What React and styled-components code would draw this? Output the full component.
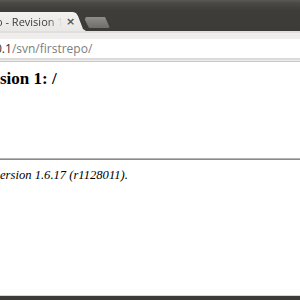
import React from 'react'
import styled, { createGlobalStyle } from 'styled-components';

const Global = createGlobalStyle`
  html, body {
    margin: 0;
    padding: 0;
    background: #3c3b37;
  }
  #root {
    width: 300px;
    height: 300px;
    overflow: hidden;
  }
`;

const App = () => {
  return (
    <Window>
      <Global />
      <TabStrip>
        <Tab>
          <TabTitle>o - Revision 1</TabTitle>
          <Close>×</Close>
        </Tab>
        <NewTab />
      </TabStrip>
      <Toolbar>
        <UrlField>
          <Host>0.1</Host>
          <Path>/svn/firstrepo/</Path>
        </UrlField>
      </Toolbar>
      <Page>
        <Heading2>sion 1: /</Heading2>
        <Rule />
        <Footer>ersion 1.6.17 (r1128011).</Footer>
      </Page>
      <StatusEdge />
    </Window>
  )
}

export default App

const Window = styled.div`
  width: 300px;
  height: 300px;
  display: flex;
  flex-direction: column;
  background: #3c3b37;
`;

const TabStrip = styled.div`
  height: 31px;
  flex-shrink: 0;
  display: flex;
  align-items: flex-end;
  background: linear-gradient(#5a5954 0px, #4a4945 3px, #3e3d39 10px, #3c3b37 31px);
`;

const Tab = styled.div`
  width: 86px;
  height: 19px;
  display: flex;
  align-items: center;
  background: linear-gradient(#f2f1f0, #e9e8e6);
  clip-path: polygon(0 0, 73px 0, 76px 1px, 78px 4px, 83px 17px, 86px 19px, 0 19px);
  overflow: hidden;
`;

const TabTitle = styled.span`
  margin-left: -4px;
  width: 65px;
  flex-shrink: 0;
  white-space: nowrap;
  font-family: "Open Sans", "Noto Sans", sans-serif;
  font-size: 11px;
  color: #3c3b37;
  -webkit-mask-image: linear-gradient(to right, #000 52px, transparent 66px);
  mask-image: linear-gradient(to right, #000 52px, transparent 66px);
`;

const Close = styled.span`
  margin-left: 5px;
  font-family: "DejaVu Sans", sans-serif;
  font-size: 11px;
  font-weight: bold;
  color: #555;
`;

const NewTab = styled.div`
  width: 25px;
  height: 11px;
  margin: 0 0 3px -1px;
  background: linear-gradient(#8f8e8a, #6e6d69);
  clip-path: polygon(0 0, 20px 0, 25px 11px, 4px 11px, 0 3px);
  border-radius: 2px;
`;

const Toolbar = styled.div`
  height: 31px;
  flex-shrink: 0;
  box-sizing: border-box;
  padding: 6px 0 0;
  background: #efeeed;
  border-top: 2px solid #e0dfdd;
  border-bottom: 1px solid #c9c8c6;
`;

const UrlField = styled.div`
  height: 19px;
  display: flex;
  align-items: center;
  background: #ffffff;
  border-bottom: 2px solid #dcdbd9;
  font-family: "Open Sans", "Noto Sans", sans-serif;
  font-size: 12px;
  white-space: nowrap;
`;

const Host = styled.span`
  margin-left: -5px;
  color: #2f2f2f;
`;

const Path = styled.span`
  color: #7d7d7d;
`;

const Page = styled.div`
  flex: 1;
  display: flex;
  flex-direction: column;
  background: #ffffff;
  font-family: "Liberation Serif", serif;
  color: #000;
`;

const Heading2 = styled.h2`
  margin: 7px 0 0;
  font-size: 17px;
  line-height: 20px;
  font-weight: bold;
`;

const Rule = styled.div`
  margin-top: 69px;
  height: 1px;
  background: #b4b4b4;
  border-bottom: 1px solid #8a8a8a;
`;

const Footer = styled.address`
  margin-top: 8px;
  font-size: 12.6px;
  line-height: 14px;
  font-style: italic;
`;

const StatusEdge = styled.div`
  height: 4px;
  flex-shrink: 0;
  background: #3c3b37;
  border-top: 1px solid #d6d6d6;
`;
